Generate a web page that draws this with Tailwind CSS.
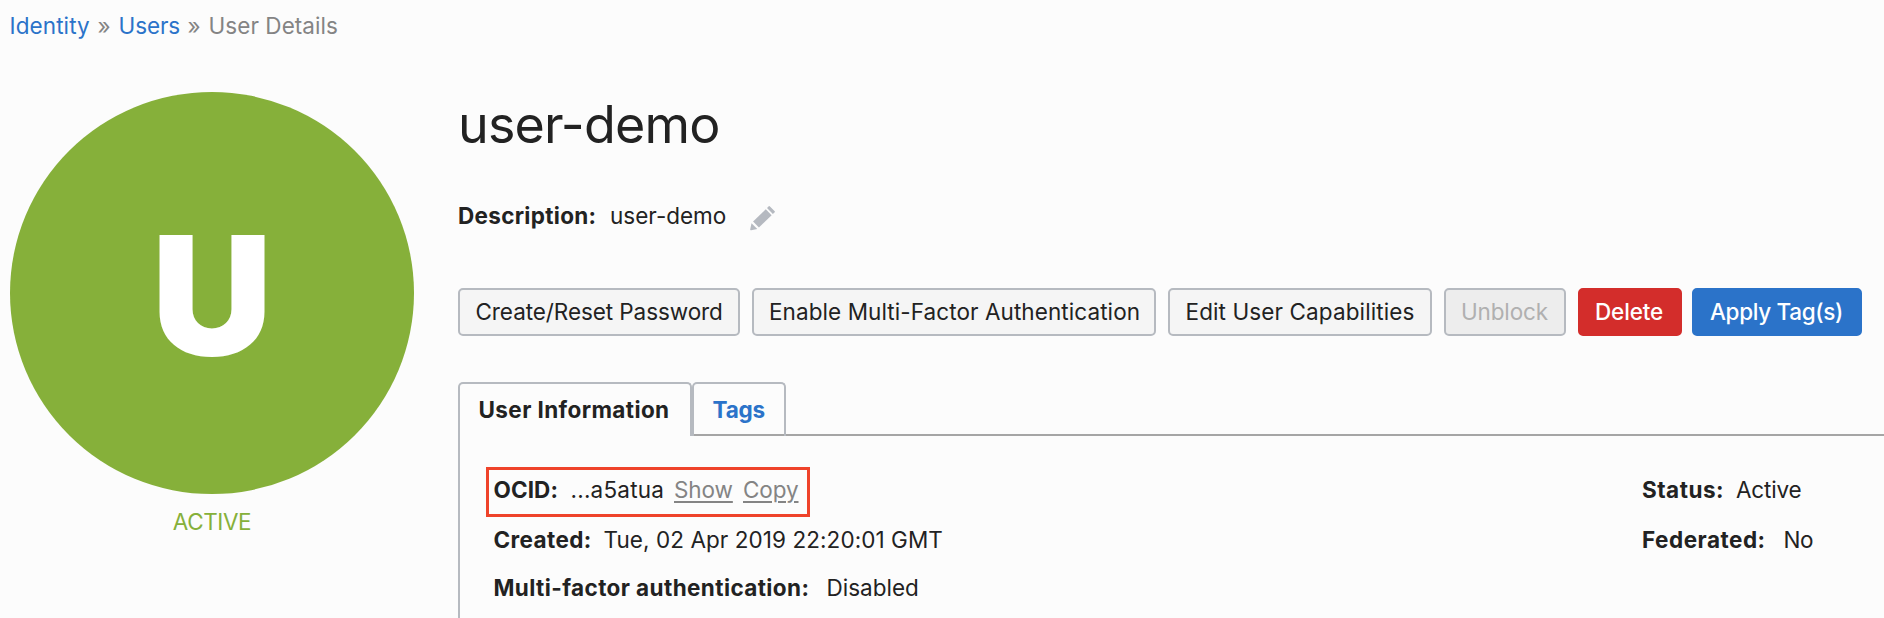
<!DOCTYPE html>
<html lang="en">
<head>
<meta charset="utf-8">
<title>User Details</title>
<script src="https://cdn.jsdelivr.net/npm/@tailwindcss/browser@4"></script>
</head>
<body class="h-[618px] overflow-hidden bg-[#fcfcfc] font-[Inter,sans-serif] text-[22.5px] leading-8 whitespace-nowrap text-[#222]">
  <nav class="flex pt-2.5 pl-[9.5px] text-[#848484]">
    <a class="w-[88px] tracking-[0.1px] text-[#2b73c9]">Identity</a>
    <span class="w-[21px] tracking-[-1px]">»</span>
    <a class="w-[69px] tracking-[-0.1px] text-[#2b73c9]">Users</a>
    <span class="w-[21px] tracking-[-1px]">»</span>
    <span class="tracking-[0.06px]">User Details</span>
  </nav>

  <div class="flex pl-2.5">
    <aside class="w-[448px] shrink-0 pt-[50px]">
      <div class="flex h-[402px] w-[404px] items-center justify-center rounded-[50%] bg-[#86b03a] text-[167px] leading-none font-black text-white"><span class="pt-1">U</span></div>
      <p class="w-[404px] pt-[11.5px] text-center tracking-[-0.4px] text-[#86b03a]">ACTIVE</p>
    </aside>

    <main class="flex-1 pt-[53px]">
      <h1 class="text-[52px] leading-[60px] tracking-[-0.8px]">user-demo</h1>

      <div class="mt-[45px] flex">
        <span class="w-[152px] font-bold tracking-[0.3px]">Description:</span>
        <span class="w-[139px]">user-demo</span>
        <svg class="mt-1.5 ml-px h-[25px] w-[25px]" viewBox="0 0 26 26" fill="#b5b9c0">
          <path d="M19.5 .3 Q20 -.2 20.5 .3 L25.7 5.5 Q26.2 6 25.7 6.5 L23.8 8.3 L17.7 2.2Z"/>
          <path d="M16.4 3.5 L22.5 9.6 L9.3 22.3 L3.2 16.2Z"/>
          <path d="M1.6 18 L7.6 24 L1.2 25.3 Q0 25.5 .2 24.3Z"/>
        </svg>
      </div>

      <div class="mt-14 flex h-12 leading-11">
        <button class="mr-3 w-[282px] rounded-[5px] border-2 border-[#b6bac0] bg-[#f5f5f5] pl-[15.5px] text-left tracking-[-0.08px]">Create/Reset Password</button>
        <button class="mr-3 w-[404px] rounded-[5px] border-2 border-[#b6bac0] bg-[#f5f5f5] pl-[15px] text-left tracking-[0.08px]">Enable Multi-Factor Authentication</button>
        <button class="mr-3 w-[264px] rounded-[5px] border-2 border-[#b6bac0] bg-[#f5f5f5] pl-[15.5px] text-left tracking-[0.11px]">Edit User Capabilities</button>
        <button class="mr-3 w-[122px] rounded-[5px] border-2 border-[#b6bac0] bg-[#ededed] pl-[15px] text-left tracking-[-0.15px] text-[#b0b0b0]">Unblock</button>
        <button class="mr-2.5 w-[104px] rounded-[5px] border-2 border-[#d32d2b] bg-[#d32d2b] pl-[15px] text-left font-medium tracking-[-0.16px] text-white">Delete</button>
        <button class="w-[170px] rounded-[5px] border-2 border-[#2b73c9] bg-[#2b73c9] pl-4 text-left font-medium tracking-[-0.34px] text-white">Apply Tag(s)</button>
      </div>

      <div class="mt-[46px] flex h-[54px] font-bold">
        <div class="w-[234px] rounded-t-[5px] border-2 border-b-0 border-[#b6bac0] pt-[10px] pl-[18.5px] tracking-[0.4px]">User Information</div>
        <div class="w-[94px] rounded-t-[5px] border-2 border-b-0 border-[#b6bac0] text-[#2b73c9]"><div class="h-[52px] border-b-2 border-[#a5a5a5] pt-[10px] pl-[18.5px] tracking-[-0.2px]">Tags</div></div>
        <div class="flex-1 border-b-2 border-[#a5a5a5]"></div>
      </div>

      <section class="flex h-[190px] border-l-2 border-[#b6bac0] pt-[31px]">
        <div class="w-[1182px]">
          <div class="ml-[25.5px] flex h-[50px] w-[324px] border-3 border-[#ef432a] pt-1 pl-[5px]">
            <span class="w-[77px] font-bold tracking-[0.1px]">OCID:</span>
            <span class="w-[103.5px] tracking-[0.22px]">...a5atua</span>
            <a class="w-[69px] text-[#848484]"><span class="tracking-[-0.1px] underline decoration-2 underline-offset-[3px]">Show</span></a>
            <a class="text-[#848484]"><span class="tracking-[-0.1px] underline decoration-2 underline-offset-[3px]">Copy</span></a>
          </div>
          <div class="flex pt-[7px] pl-[33.5px]">
            <span class="w-[110px] font-bold tracking-[0.4px]">Created:</span>
            <span class="tracking-[0.07px]">Tue, 02 Apr 2019 22:20:01 GMT</span>
          </div>
          <div class="flex pt-[15.5px] pl-[33.5px]">
            <span class="w-[333px] font-bold tracking-[0.4px]">Multi-factor authentication:</span>
            <span class="tracking-[0px]">Disabled</span>
          </div>
        </div>
        <div>
          <div class="flex pt-[7px]">
            <span class="w-[94px] font-bold tracking-[0.5px]">Status:</span>
            <span class="tracking-[-0.2px]">Active</span>
          </div>
          <div class="flex pt-[18px]">
            <span class="w-[141.5px] font-bold tracking-[0.5px]">Federated:</span>
            <span class="tracking-[-0.4px]">No</span>
          </div>
        </div>
      </section>
    </main>
  </div>
</body>
</html>
